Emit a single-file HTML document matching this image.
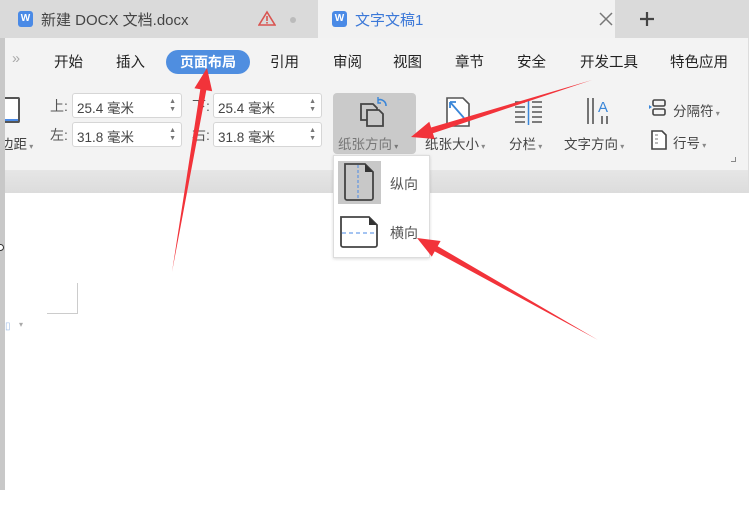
<!DOCTYPE html>
<html><head><meta charset="utf-8"><style>
*{margin:0;padding:0;box-sizing:border-box}
body{width:749px;height:508px;overflow:hidden;background:#fff;position:relative;font-family:"Liberation Sans","Noto Sans CJK SC",sans-serif;color:#333}
.a{position:absolute;white-space:nowrap}
.m{font-size:14.5px;color:#222;top:51px}
.inp{position:absolute;background:#fff;border:1px solid #d6d6d6;border-radius:3px;height:25px;font-size:13.5px;color:#444;padding:3px 0 0 4px}
.inp i{position:absolute;right:5px;font-style:normal;font-size:7px;color:#777;line-height:8px;top:4px}
.lbl{font-size:14px;color:#555}
.t{font-size:13.5px;color:#444}
</style></head><body>
<div class="a" style="left:0;top:0;width:749px;height:38px;background:#dadada"></div>
<div class="a" style="left:318px;top:0;width:297px;height:38px;background:#f2f2f2"></div>
<div class="a" style="left:18px;top:11px;width:15px;height:16px;background:#4a8ae6;border-radius:3px;color:#fff;font-size:10px;text-align:center;line-height:16px;font-weight:bold">W</div>
<div class="a" style="left:41px;top:9px;font-size:15px;color:#444">新建 DOCX 文档.docx</div>
<svg class="a" style="left:258px;top:10px" width="18" height="17"><path d="M9 2 L17 15 L1 15 Z" fill="none" stroke="#d9534f" stroke-width="1.6"/><rect x="8.2" y="6" width="1.6" height="5" fill="#d9534f"/><rect x="8.2" y="12" width="1.6" height="1.6" fill="#d9534f"/></svg>
<div class="a" style="left:290px;top:17px;width:6px;height:6px;border-radius:3px;background:#bbb"></div>
<div class="a" style="left:332px;top:11px;width:15px;height:16px;background:#4a8ae6;border-radius:3px;color:#fff;font-size:10px;text-align:center;line-height:16px;font-weight:bold">W</div>
<div class="a" style="left:355px;top:9px;font-size:15px;color:#3b78d8">文字文稿1</div>
<svg class="a" style="left:599px;top:12px" width="14" height="14"><path d="M1 1L13 13M13 1L1 13" stroke="#777" stroke-width="1.5"/></svg>
<svg class="a" style="left:639px;top:11px" width="16" height="16"><path d="M8 1V15M1 8H15" stroke="#444" stroke-width="2.2"/></svg>
<div class="a" style="left:0;top:38px;width:749px;height:132px;background:#f3f3f3;border-right:1px solid #ddd"></div>
<div class="a m" style="left:12px;color:#aaa">»</div>
<div class="a m" style="left:54px">开始</div>
<div class="a m" style="left:116px">插入</div>
<div class="a" style="left:166px;top:50px;width:84px;height:24px;border-radius:12px;background:#4f8ee0;color:#fff;font-size:14px;font-weight:bold;text-align:center;line-height:24px">页面布局</div>
<div class="a m" style="left:270px">引用</div>
<div class="a m" style="left:333px">审阅</div>
<div class="a m" style="left:393px">视图</div>
<div class="a m" style="left:455px">章节</div>
<div class="a m" style="left:517px">安全</div>
<div class="a m" style="left:580px">开发工具</div>
<div class="a m" style="left:670px">特色应用</div>
<div class="a" style="left:2px;top:97px;width:18px;height:26px;border:2px solid #555;border-left:none;border-radius:2px;background:#fff"></div>
<div class="a" style="left:0;top:119px;width:18px;height:2px;background:#4a8ae6"></div>
<div class="a t" style="left:0;top:133px">边距<span style="font-size:8px;color:#888"> ▾</span></div>
<div class="a lbl" style="left:50px;top:96px">上:</div>
<div class="inp" style="left:72px;top:93px;width:110px">25.4 毫米<i>▲<br>▼</i></div>
<div class="a lbl" style="left:192px;top:96px">下:</div>
<div class="inp" style="left:213px;top:93px;width:109px">25.4 毫米<i>▲<br>▼</i></div>
<div class="a lbl" style="left:50px;top:125px">左:</div>
<div class="inp" style="left:72px;top:122px;width:110px">31.8 毫米<i>▲<br>▼</i></div>
<div class="a lbl" style="left:192px;top:125px">右:</div>
<div class="inp" style="left:213px;top:122px;width:109px">31.8 毫米<i>▲<br>▼</i></div>
<div class="a" style="left:333px;top:93px;width:83px;height:61px;background:#cacaca;border-radius:4px"></div>
<svg class="a" style="left:358px;top:96px" width="36" height="32"><path d="M3 8h12l4 4v12H3z" fill="#cacaca" stroke="#444" stroke-width="1.8"/><path d="M9 14h12l4 4v12H9z" fill="#cacaca" stroke="#444" stroke-width="1.8"/><path d="M20 4a6 6 0 0 1 8 6" fill="none" stroke="#3a86d8" stroke-width="1.6"/><path d="M20 1v6h3" fill="none" stroke="#3a86d8" stroke-width="1.4"/></svg>
<div class="a t" style="left:338px;top:133px;color:#777">纸张方向<span style="font-size:8px"> ▾</span></div>
<svg class="a" style="left:444px;top:96px" width="28" height="32"><path d="M3 2h16l6 6v22H3z" fill="#fff" stroke="#555" stroke-width="1.6"/><path d="M6 6l14 16" stroke="#3a86d8" stroke-width="1.8"/><path d="M6 6v6M6 6h6" stroke="#3a86d8" stroke-width="1.8"/></svg>
<div class="a t" style="left:425px;top:133px">纸张大小<span style="font-size:8px;color:#888"> ▾</span></div>
<svg class="a" style="left:513px;top:98px" width="32" height="28"><g stroke="#555" stroke-width="1.5"><path d="M2 4h10M2 9h10M2 14h10M2 19h10M2 24h10M19 4h10M19 9h10M19 14h10M19 19h10M19 24h10"/></g><path d="M15.5 1v26" stroke="#3a86d8" stroke-width="1.5"/></svg>
<div class="a t" style="left:509px;top:133px">分栏<span style="font-size:8px;color:#888"> ▾</span></div>
<svg class="a" style="left:585px;top:96px" width="30" height="32"><g stroke="#555" stroke-width="1.6"><path d="M3 2v26M8 2v26M17 20v8M22 20v8"/></g><text x="13" y="16" font-family="Liberation Sans" font-size="15" fill="#3a86d8">A</text></svg>
<div class="a t" style="left:564px;top:133px">文字方向<span style="font-size:8px;color:#888"> ▾</span></div>
<svg class="a" style="left:648px;top:98px" width="20" height="20"><path d="M1 7l3 2-3 2z" fill="#3a86d8"/><rect x="5" y="2" width="12" height="6" rx="1.5" fill="none" stroke="#444" stroke-width="1.6"/><rect x="5" y="11" width="12" height="6" rx="1.5" fill="none" stroke="#444" stroke-width="1.6"/></svg>
<div class="a t" style="left:673px;top:100px">分隔符<span style="font-size:8px;color:#888"> ▾</span></div>
<svg class="a" style="left:650px;top:130px" width="18" height="20"><path d="M2 1h10l4 4v14H2z" fill="#fff" stroke="#444" stroke-width="1.6"/><path d="M5 5h3M5 9h3M5 13h3" stroke="#777"/></svg>
<div class="a t" style="left:673px;top:132px">行号<span style="font-size:8px;color:#888"> ▾</span></div>
<div class="a" style="left:731px;top:157px;width:5px;height:5px;border-right:1px solid #888;border-bottom:1px solid #888"></div>
<div class="a" style="left:0;top:170px;width:749px;height:23px;background:linear-gradient(#e6e6e6,#dcdcdc);border-right:1px solid #ddd"></div>
<div class="a" style="left:0;top:38px;width:5px;height:452px;background:#c8c8c8"></div>
<div class="a" style="left:-3px;top:244px;width:7px;height:7px;border:1px solid #333;border-radius:4px;background:#fff"></div>
<div class="a" style="left:47px;top:283px;width:31px;height:31px;border-right:1px solid #ccc;border-bottom:1px solid #ccc"></div>
<div class="a" style="left:5px;top:321px;font-size:10px;color:#9bbbe6">▯</div>
<div class="a" style="left:19px;top:320px;font-size:8px;color:#aaa">▾</div>
<div class="a" style="left:333px;top:155px;width:97px;height:103px;background:#fff;border:1px solid #ddd;box-shadow:0 1px 3px rgba(0,0,0,.15)"></div>
<div class="a" style="left:338px;top:161px;width:43px;height:43px;background:#c8c8c8"></div>
<svg class="a" style="left:343px;top:162px" width="32" height="40"><path d="M2 2h20l8 8v26a2 2 0 0 1-2 2H4a2 2 0 0 1-2-2z" fill="#c8c8c8" stroke="#444" stroke-width="1.8"/><path d="M22 2v8h8z" fill="#333"/><path d="M15 3v34" stroke="#4a8ae6" stroke-width="1" stroke-dasharray="3 2"/></svg>
<div class="a" style="left:390px;top:174px;font-size:14px;color:#555">纵向</div>
<svg class="a" style="left:339px;top:215px" width="40" height="34"><path d="M2 2h28l8 8v20a2 2 0 0 1-2 2H4a2 2 0 0 1-2-2z" fill="#fff" stroke="#444" stroke-width="1.8"/><path d="M30 2v8h8z" fill="#333"/><path d="M3 18h34" stroke="#4a8ae6" stroke-width="1" stroke-dasharray="4 3"/></svg>
<div class="a" style="left:390px;top:223px;font-size:14px;color:#555">横向</div>
<svg class="a" style="left:0;top:0" width="749" height="508">
<g fill="#f2333a">
<polygon points="172,272 200.3,89.2 194.4,88.2 207,68 212.2,91.2 206.3,90.2"/>
<polygon points="592,80 431.1,127.5 429.3,121.8 411,137 434.7,139 432.9,133.3"/>
<polygon points="598,340 437.7,246.2 440.6,241 417,238 431.8,256.6 434.7,251.4"/>
</g></svg>
</body></html>
